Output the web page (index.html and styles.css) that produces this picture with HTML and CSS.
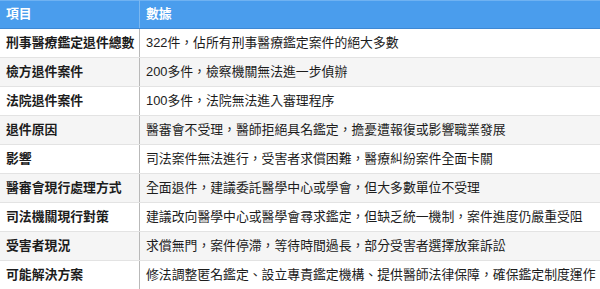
FILE: index.html
```html
<!DOCTYPE html>
<html lang="zh-Hant">
<head>
<meta charset="utf-8">
<link rel="stylesheet" href="styles.css">
</head>
<body>
<table class="data">
  <thead>
    <tr><th class="key">項目</th><th>數據</th></tr>
  </thead>
  <tbody>
    <tr><td class="key">刑事醫療鑑定退件總數</td><td>322件，佔所有刑事醫療鑑定案件的絕大多數</td></tr>
    <tr><td class="key">檢方退件案件</td><td>200多件，檢察機關無法進一步偵辦</td></tr>
    <tr><td class="key">法院退件案件</td><td>100多件，法院無法進入審理程序</td></tr>
    <tr><td class="key">退件原因</td><td>醫審會不受理，醫師拒絕具名鑑定，擔憂遭報復或影響職業發展</td></tr>
    <tr><td class="key">影響</td><td>司法案件無法進行，受害者求償困難，醫療糾紛案件全面卡關</td></tr>
    <tr><td class="key">醫審會現行處理方式</td><td>全面退件，建議委託醫學中心或學會，但大多數單位不受理</td></tr>
    <tr><td class="key">司法機關現行對策</td><td>建議改向醫學中心或醫學會尋求鑑定，但缺乏統一機制，案件進度仍嚴重受阻</td></tr>
    <tr><td class="key">受害者現況</td><td>求償無門，案件停滯，等待時間過長，部分受害者選擇放棄訴訟</td></tr>
    <tr><td class="key">可能解決方案</td><td>修法調整匿名鑑定、設立專責鑑定機構、提供醫師法律保障，確保鑑定制度運作</td></tr>
  </tbody>
</table>
</body>
</html>
```

FILE: styles.css
```css
html, body {
  margin: 0;
  padding: 0;
  background: #ffffff;
}

.data {
  width: 600px;
  border-collapse: collapse;
  table-layout: fixed;
  font-family: "Liberation Sans", "Noto Sans CJK TC", sans-serif;
  font-size: 12.85px;
  color: #1c1c1c;
}

.data th,
.data td {
  padding: 5px 6px;
  line-height: 18px;
  text-align: left;
  white-space: nowrap;
  overflow: hidden;
}

.data th {
  background: #4a9ded;
  color: #ffffff;
  font-weight: bold;
  border-top: 1px solid #6fb2f2;
  padding-top: 4px;
  border-bottom: 1px solid #3e88d4;
}

.data th.key {
  width: 127px;
  border-right: 1px solid #7ab7f0;
}

.data td {
  border-bottom: 1px solid #e3e3e3;
}

.data td.key {
  font-weight: bold;
  border-right: 1px solid #b9b9b9;
}

.data tbody tr:nth-child(even) td {
  background: #f5f5f5;
}
```
